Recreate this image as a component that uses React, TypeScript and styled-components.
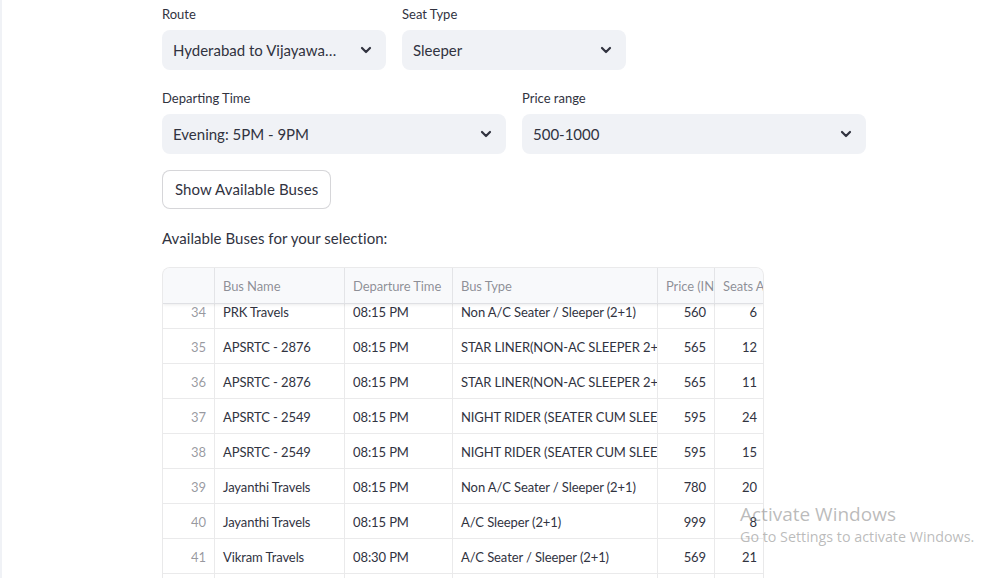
import React from "react";
import styled, { createGlobalStyle } from "styled-components";

const GlobalStyle = createGlobalStyle`
  html, body { margin: 0; padding: 0; background: #ffffff; }
  body {
    font-family: "Lato", "Noto Sans", sans-serif;
    color: rgb(49, 51, 63);
    overflow: hidden;
  }
  * { box-sizing: border-box; }
`;

const Page = styled.div`
  display: flex;
  width: 1004px;
  height: 578px;
  overflow: hidden;
`;

const SideStrip = styled.div`
  width: 2px;
  flex: none;
  background: #f0f2f6;
`;

const Main = styled.main`
  flex: none;
  width: 704px;
  margin-left: 160px;
  padding-top: 4px;
  display: flex;
  flex-direction: column;
`;

const Row = styled.div<{ $cols: number }>`
  display: grid;
  grid-template-columns: repeat(${(p) => p.$cols}, 1fr);
  column-gap: 16px;
  margin-bottom: ${(p) => (p.$cols === 3 ? 18 : 16)}px;
`;

const Field = styled.div`
  display: flex;
  flex-direction: column;
  gap: 6px;
  min-width: 0;
`;

const Label = styled.label`
  font-size: 13px;
  line-height: 20px;
  height: 20px;
  color: rgb(49, 51, 63);
`;

const SelectBox = styled.div`
  height: 40px;
  background: #f0f2f6;
  border-radius: 8px;
  display: flex;
  align-items: center;
  padding: 0 10px 0 11px;
  gap: 18px;
`;

const SelectValue = styled.span`
  flex: 1;
  min-width: 0;
  font-size: 15px;
  line-height: 20px;
  white-space: nowrap;
  overflow: hidden;
  text-overflow: ellipsis;
  color: rgb(49, 51, 63);
  padding-bottom: 1px;
`;

const Chevron = () => (
  <svg width="20" height="20" viewBox="0 0 20 20" fill="none">
    <path d="M6 8l4 4 4-4" stroke="rgb(49,51,63)" strokeWidth="2.2" strokeLinecap="round" strokeLinejoin="round" />
  </svg>
);

const Button = styled.button`
  align-self: flex-start;
  height: 40px;
  padding: 0 12px;
  background: #ffffff;
  border: 1px solid rgba(49, 51, 63, 0.2);
  border-radius: 8px;
  font-family: inherit;
  font-size: 15px;
  letter-spacing: 0.1px;
  color: rgb(49, 51, 63);
  margin-bottom: 17px;
`;

const Caption = styled.p`
  margin: 0 0 17px 0;
  font-size: 15px;
  letter-spacing: 0.05px;
  line-height: 24px;
`;

const cols = "51px 130px 108px 205px 57px 51px";

const Table = styled.div`
  width: 602px;
  border: 1px solid rgba(49, 51, 63, 0.1);
  border-bottom: none;
  border-radius: 8px 8px 0 0;
  overflow: hidden;
  height: 320px;
  display: flex;
  flex-direction: column;
`;

const HeaderRow = styled.div`
  display: grid;
  grid-template-columns: ${cols};
  height: 36px;
  background: #f8f9fb;
  border-bottom: 1px solid rgba(49, 51, 63, 0.12);
  box-shadow: 0 1px 3px rgba(0, 0, 0, 0.08);
  position: relative;
  z-index: 1;
  flex: none;
`;

const HeaderCell = styled.div`
  display: flex;
  align-items: center;
  padding: 1px 8px 0;
  font-size: 13px;
  letter-spacing: -0.1px;
  color: rgba(49, 51, 63, 0.55);
  white-space: nowrap;
  overflow: hidden;
  border-left: 1px solid rgba(49, 51, 63, 0.1);
  &:first-child { border-left: none; }
`;

const Body = styled.div`
  flex: 1;
  overflow: hidden;
`;

const BodyInner = styled.div`
  margin-top: -10px;
`;

const DataRow = styled.div`
  display: grid;
  grid-template-columns: ${cols};
  height: 35px;
  border-bottom: 1px solid rgba(49, 51, 63, 0.1);
`;

const Cell = styled.div<{ $align?: "right" | "left"; $muted?: boolean }>`
  display: flex;
  align-items: center;
  justify-content: ${(p) => (p.$align === "right" ? "flex-end" : "flex-start")};
  padding: 2px 8px 0;
  font-size: 13px;
  letter-spacing: -0.1px;
  color: ${(p) => (p.$muted ? "rgba(49, 51, 63, 0.5)" : "rgb(49, 51, 63)")};
  white-space: nowrap;
  overflow: hidden;
  border-left: 1px solid rgba(49, 51, 63, 0.1);
  &:first-child { border-left: none; }
`;

const Watermark = styled.div`
  position: absolute;
  left: 740px;
  top: 502px;
  font-family: "Open Sans", "Noto Sans", sans-serif;
  color: rgba(120, 120, 120, 0.5);
  pointer-events: none;
`;

const WmTitle = styled.div`
  font-size: 19px;
  line-height: 25px;
`;

const WmSub = styled.div`
  font-size: 14.3px;
  line-height: 20px;
`;

const rows: [number, string, string, string, number, number][] = [
  [34, "PRK Travels", "08:15 PM", "Non A/C Seater / Sleeper (2+1)", 560, 6],
  [35, "APSRTC - 2876", "08:15 PM", "STAR LINER(NON-AC SLEEPER 2+1)", 565, 12],
  [36, "APSRTC - 2876", "08:15 PM", "STAR LINER(NON-AC SLEEPER 2+1)", 565, 11],
  [37, "APSRTC - 2549", "08:15 PM", "NIGHT RIDER (SEATER CUM SLEEPER)", 595, 24],
  [38, "APSRTC - 2549", "08:15 PM", "NIGHT RIDER (SEATER CUM SLEEPER)", 595, 15],
  [39, "Jayanthi Travels", "08:15 PM", "Non A/C Seater / Sleeper (2+1)", 780, 20],
  [40, "Jayanthi Travels", "08:15 PM", "A/C Sleeper (2+1)", 999, 8],
  [41, "Vikram Travels", "08:30 PM", "A/C Seater / Sleeper (2+1)", 569, 21],
  [42, "Vikram Travels", "08:30 PM", "A/C Sleeper (2+1)", 799, 14],
];

const Select = ({ label, value }: { label: string; value: string }) => (
  <Field>
    <Label>{label}</Label>
    <SelectBox>
      <SelectValue>{value}</SelectValue>
      <Chevron />
    </SelectBox>
  </Field>
);

export default function App() {
  return (
    <>
      <GlobalStyle />
      <Page>
        <SideStrip />
        <Main>
          <Row $cols={3}>
            <Select label="Route" value="Hyderabad to Vijayawada" />
            <Select label="Seat Type" value="Sleeper" />
          </Row>
          <Row $cols={2}>
            <Select label="Departing Time" value="Evening: 5PM - 9PM" />
            <Select label="Price range" value="500-1000" />
          </Row>
          <Button>Show Available Buses</Button>
          <Caption>Available Buses for your selection:</Caption>
          <Table>
            <HeaderRow>
              <HeaderCell />
              <HeaderCell>Bus Name</HeaderCell>
              <HeaderCell>Departure Time</HeaderCell>
              <HeaderCell>Bus Type</HeaderCell>
              <HeaderCell>Price (INR)</HeaderCell>
              <HeaderCell>Seats Available</HeaderCell>
            </HeaderRow>
            <Body>
              <BodyInner>
                {rows.map((r) => (
                  <DataRow key={r[0]}>
                    <Cell $align="right" $muted>{r[0]}</Cell>
                    <Cell>{r[1]}</Cell>
                    <Cell>{r[2]}</Cell>
                    <Cell>{r[3]}</Cell>
                    <Cell $align="right">{r[4]}</Cell>
                    <Cell $align="right">{r[5]}</Cell>
                  </DataRow>
                ))}
              </BodyInner>
            </Body>
          </Table>
        </Main>
        <Watermark>
          <WmTitle>Activate Windows</WmTitle>
          <WmSub>Go to Settings to activate Windows.</WmSub>
        </Watermark>
      </Page>
    </>
  );
}
